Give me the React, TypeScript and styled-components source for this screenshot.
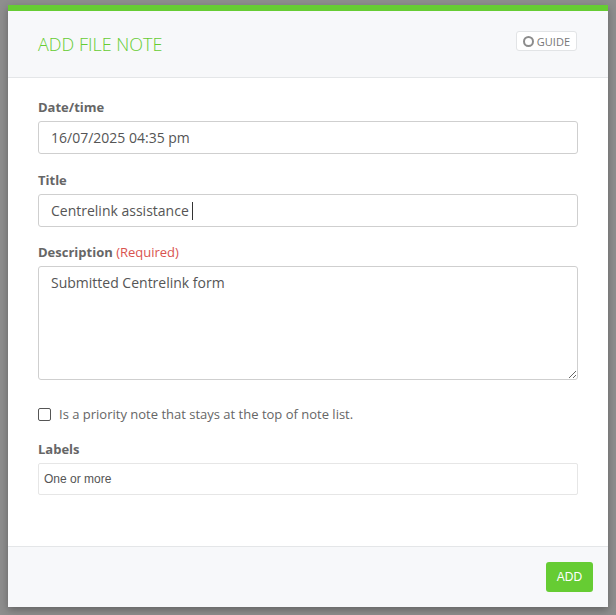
import React from "react";
import styled, { createGlobalStyle } from "styled-components";

const GlobalStyle = createGlobalStyle`
  html, body {
    margin: 0;
    padding: 0;
    background: #8e8e8e;
  }
  body {
    font-family: "Open Sans", "Liberation Sans", sans-serif;
  }
`;

const Backdrop = styled.div`
  min-height: 615px;
  padding: 5px 8px 0;
  box-sizing: border-box;
`;

const Modal = styled.div`
  width: 600px;
  background: #fff;
  border-top: 6px solid #66cc33;
  box-shadow: 0 3px 8px rgba(0, 0, 0, 0.3);
  display: flex;
  flex-direction: column;
`;

const Header = styled.div`
  height: 66px;
  padding: 0 31px 0 30px;
  background: #f7f8fa;
  border-bottom: 1px solid #e4e6e8;
  display: flex;
  align-items: center;
  justify-content: space-between;
`;

const Title = styled.h2`
  margin: 0 0 1px;
  font-size: 18px;
  font-weight: 300;
  color: #66cc33;
`;

const GuideButton = styled.button`
  height: 20px;
  padding: 0 6px;
  border: 1px solid #e2e4e6;
  border-radius: 3px;
  background: #fff;
  display: flex;
  align-items: center;
  gap: 3px;
  font-family: "Open Sans", sans-serif;
  font-size: 11px;
  color: #777;
  margin-top: -6px;
`;

const Ring = styled.span`
  width: 7px;
  height: 7px;
  border: 2px solid #8c8c8c;
  border-radius: 50%;
`;

const Body = styled.div`
  height: 468px;
  padding: 20px 30px 0;
  box-sizing: border-box;
`;

const Group = styled.div<{ $gap?: number }>`
  margin-bottom: ${(p) => p.$gap ?? 17}px;
`;

const Label = styled.div`
  font-size: 13px;
  font-weight: 700;
  color: #666;
  line-height: 18px;
  margin-bottom: 5px;
`;

const Required = styled.span`
  font-weight: 400;
  color: #d9534f;
`;

const fieldBase = `
  width: 100%;
  box-sizing: border-box;
  border: 1px solid #cfcfcf;
  border-radius: 3px;
  background: #fff;
  font-family: "Open Sans", sans-serif;
  font-size: 14px;
  color: #555;
  padding: 0 12px;
  outline: none;
`;

const TextInput = styled.input`
  ${fieldBase}
  height: 33px;
  display: block;
`;

const FakeInput = styled.div`
  ${fieldBase}
  height: 33px;
  display: flex;
  align-items: center;
`;

const Caret = styled.span`
  display: inline-block;
  width: 1px;
  height: 18px;
  background: #333;
  margin-left: 3px;
`;

const TextArea = styled.textarea`
  ${fieldBase}
  display: block;
  height: 114px;
  padding: 6px 12px;
  line-height: 20px;
  resize: vertical;
`;

const CheckRow = styled.label`
  display: flex;
  align-items: center;
  gap: 8px;
  font-size: 13px;
  color: #666;
  margin: 25px 0 17px;
`;

const Box = styled.span`
  width: 11px;
  height: 11px;
  border: 1px solid #555;
  border-radius: 2px;
  background: #fff;
`;

const TagInput = styled.input`
  width: 100%;
  box-sizing: border-box;
  height: 32px;
  border: 1px solid #e6e6e6;
  border-radius: 2px;
  padding: 0 5px;
  font-family: "Liberation Sans", Arial, sans-serif;
  font-size: 12px;
  color: #555;
  outline: none;
  &::placeholder {
    color: #555;
  }
`;

const Footer = styled.div`
  height: 60px;
  background: #f7f8fa;
  border-top: 1px solid #e4e6e8;
  padding: 0 15px;
  display: flex;
  align-items: center;
  justify-content: flex-end;
`;

const AddButton = styled.button`
  width: 47px;
  height: 30px;
  border: none;
  border-radius: 3px;
  background: #66cc33;
  color: #fff;
  font-family: "Liberation Sans", Arial, sans-serif;
  font-size: 12px;
`;

const App: React.FC = () => (
  <>
    <GlobalStyle />
    <Backdrop>
      <Modal>
        <Header>
          <Title>ADD FILE NOTE</Title>
          <GuideButton>
            <Ring />
            GUIDE
          </GuideButton>
        </Header>
        <Body>
          <Group>
            <Label>Date/time</Label>
            <TextInput defaultValue="16/07/2025 04:35 pm" readOnly />
          </Group>
          <Group $gap={16}>
            <Label>Title</Label>
            <FakeInput>
              Centrelink assistance
              <Caret />
            </FakeInput>
          </Group>
          <Group $gap={0}>
            <Label>
              Description <Required>(Required)</Required>
            </Label>
            <TextArea defaultValue="Submitted Centrelink form" />
          </Group>
          <CheckRow>
            <Box />
            Is a priority note that stays at the top of note list.
          </CheckRow>
          <Group>
            <Label>Labels</Label>
            <TagInput placeholder="One or more" />
          </Group>
        </Body>
        <Footer>
          <AddButton>ADD</AddButton>
        </Footer>
      </Modal>
    </Backdrop>
  </>
);

export default App;
